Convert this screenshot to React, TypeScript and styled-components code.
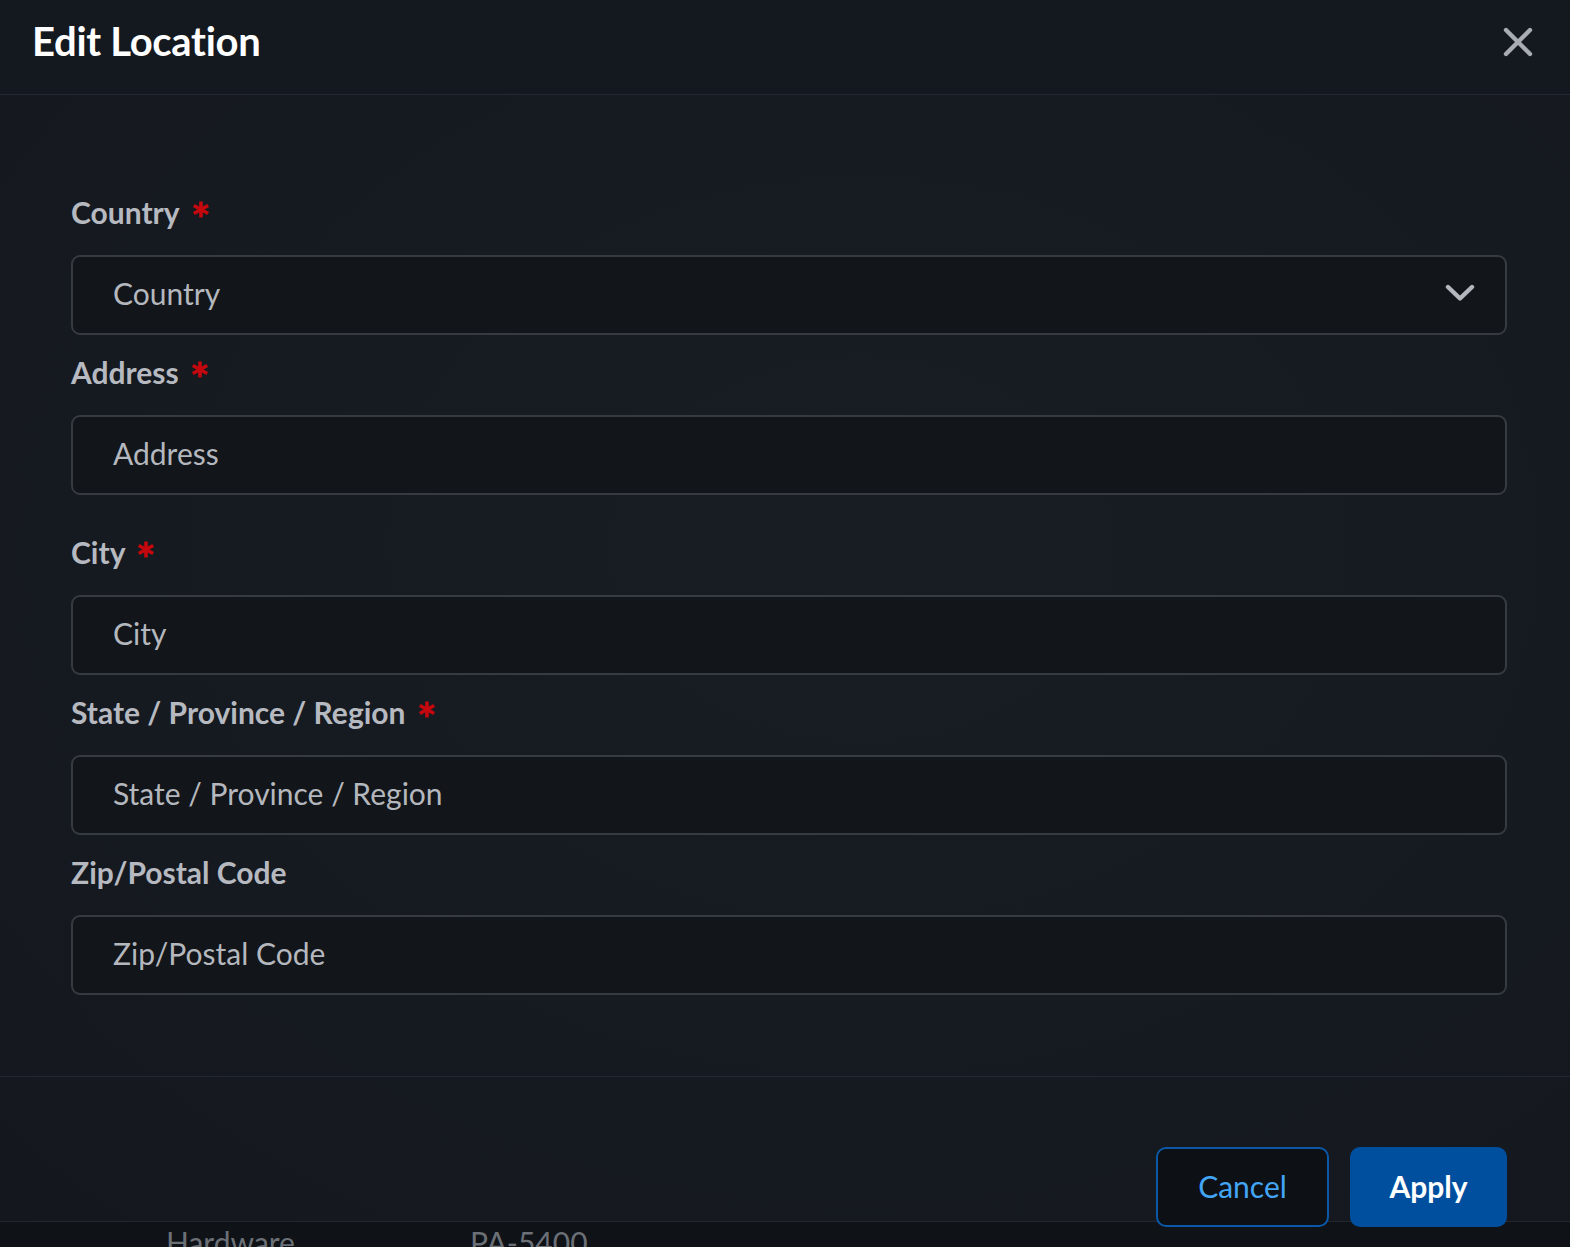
import { createGlobalStyle, styled } from 'styled-components';

const GlobalStyle = createGlobalStyle`
  html, body {
    margin: 0;
    padding: 0;
    background: #101317;
    overflow: hidden;
  }
  * {
    box-sizing: border-box;
  }
`;

type Field = {
  label: string;
  required?: boolean;
  select?: boolean;
  spaced?: boolean;
};

const fields: Field[] = [
  { label: 'Country', required: true, select: true },
  { label: 'Address', required: true, spaced: true },
  { label: 'City', required: true },
  { label: 'State / Province / Region', required: true },
  { label: 'Zip/Postal Code' },
];

function RequiredMark() {
  return (
    <Star aria-label="required">
      <svg width="18" height="17" viewBox="0 0 18 17">
        <g stroke="#c4080d" strokeWidth="3.6" strokeLinecap="butt">
          <path d="M9 0.5 V16.5" />
          <path d="M1.8 4.5 L16.2 12.5" />
          <path d="M16.2 4.5 L1.8 12.5" />
        </g>
      </svg>
    </Star>
  );
}

function App() {
  return (
    <>
      <GlobalStyle />
      <Page>
        <Modal>
          <Header>
            <Title>Edit Location</Title>
            <CloseBtn aria-label="close">
              <svg width="30" height="30" viewBox="0 0 30 30">
                <path
                  d="M3 3 L27 27 M27 3 L3 27"
                  stroke="#a9adb3"
                  strokeWidth="4.4"
                  strokeLinecap="round"
                />
              </svg>
            </CloseBtn>
          </Header>
          <Body>
            {fields.map((f) => (
              <FieldGroup key={f.label} $spaced={f.spaced}>
                <Label>
                  {f.label}
                  {f.required ? <RequiredMark /> : null}
                </Label>
                <InputBox>
                  <Placeholder>{f.label}</Placeholder>
                  {f.select ? (
                    <svg width="30" height="20" viewBox="0 0 30 20">
                      <path
                        d="M3 4 L15 15.5 L27 4"
                        stroke="#b4b8be"
                        strokeWidth="4.4"
                        fill="none"
                        strokeLinecap="round"
                        strokeLinejoin="round"
                      />
                    </svg>
                  ) : null}
                </InputBox>
              </FieldGroup>
            ))}
          </Body>
          <Footer>
            <CancelBtn>Cancel</CancelBtn>
            <ApplyBtn>Apply</ApplyBtn>
          </Footer>
        </Modal>
        <Behind>
          <BehindCell $width={304}>Hardware</BehindCell>
          <BehindCell>PA-5400</BehindCell>
        </Behind>
      </Page>
    </>
  );
}

const Page = styled.div`
  width: 1570px;
  height: 1247px;
  display: flex;
  flex-direction: column;
  font-family: Lato, 'Liberation Sans', sans-serif;
`;

const Modal = styled.div`
  height: 1221px;
  display: flex;
  flex-direction: column;
  background: radial-gradient(
    ellipse at 55% 45%,
    #181d24 0%,
    #161a21 50%,
    #14181e 100%
  );
`;

const Header = styled.div`
  height: 95px;
  flex-shrink: 0;
  display: flex;
  align-items: center;
  justify-content: space-between;
  padding: 0 37px 10px 32px;
  border-bottom: 1px solid #242a32;
  background: #141920;
`;

const Title = styled.div`
  font-size: 40px;
  font-weight: 700;
  color: #ffffff;
  letter-spacing: -0.3px;
  margin-top: -2px;
`;

const CloseBtn = styled.button`
  background: none;
  border: none;
  padding: 0;
  display: flex;
  cursor: pointer;
`;

const Body = styled.div`
  flex: 1;
  padding: 99px 63px 0 71px;
  display: flex;
  flex-direction: column;
  border-bottom: 1px solid #222830;
`;

const FieldGroup = styled.div<{ $spaced?: boolean }>`
  display: flex;
  flex-direction: column;
  margin-bottom: ${(p) => (p.$spaced ? '39px' : '19px')};
`;

const Label = styled.div`
  font-size: 30px;
  font-weight: 700;
  color: #b6bac0;
  line-height: 36px;
  margin-bottom: 25px;
  display: flex;
  align-items: center;
  gap: 12px;
`;

const Star = styled.span`
  display: flex;
  margin-top: -6px;
`;

const InputBox = styled.div`
  height: 80px;
  border: 2px solid #363b42;
  border-radius: 9px;
  background: #121519;
  display: flex;
  align-items: center;
  justify-content: space-between;
  padding: 0 30px 4px 40px;
`;

const Placeholder = styled.span`
  font-size: 30px;
  color: #b4b8be;
`;

const Footer = styled.div`
  height: 144px;
  flex-shrink: 0;
  display: flex;
  justify-content: flex-end;
  align-items: flex-start;
  gap: 21px;
  padding: 70px 63px 0 0;
  position: relative;
  z-index: 1;
  overflow: visible;
`;

const BaseBtn = styled.button`
  height: 80px;
  border-radius: 10px;
  font-family: Lato, 'Liberation Sans', sans-serif;
  font-size: 30px;
  padding-bottom: 3px;
  cursor: pointer;
`;

const CancelBtn = styled(BaseBtn)`
  width: 173px;
  border: 2px solid #0b58a8;
  background: #0d1014;
  color: #42a5f5;
  font-weight: 400;
`;

const ApplyBtn = styled(BaseBtn)`
  width: 157px;
  border: none;
  background: #004f9f;
  color: #ffffff;
  font-weight: 700;
`;

const Behind = styled.div`
  flex: 1;
  display: flex;
  padding-left: 166px;
  background: #0f1216;
  border-top: 1px solid #22272e;
  overflow: hidden;
`;

const BehindCell = styled.div<{ $width?: number }>`
  width: ${(p) => (p.$width ? `${p.$width}px` : 'auto')};
  font-size: 30px;
  color: #6b7077;
  line-height: 36px;
  margin-top: 2px;
`;

export default App;
